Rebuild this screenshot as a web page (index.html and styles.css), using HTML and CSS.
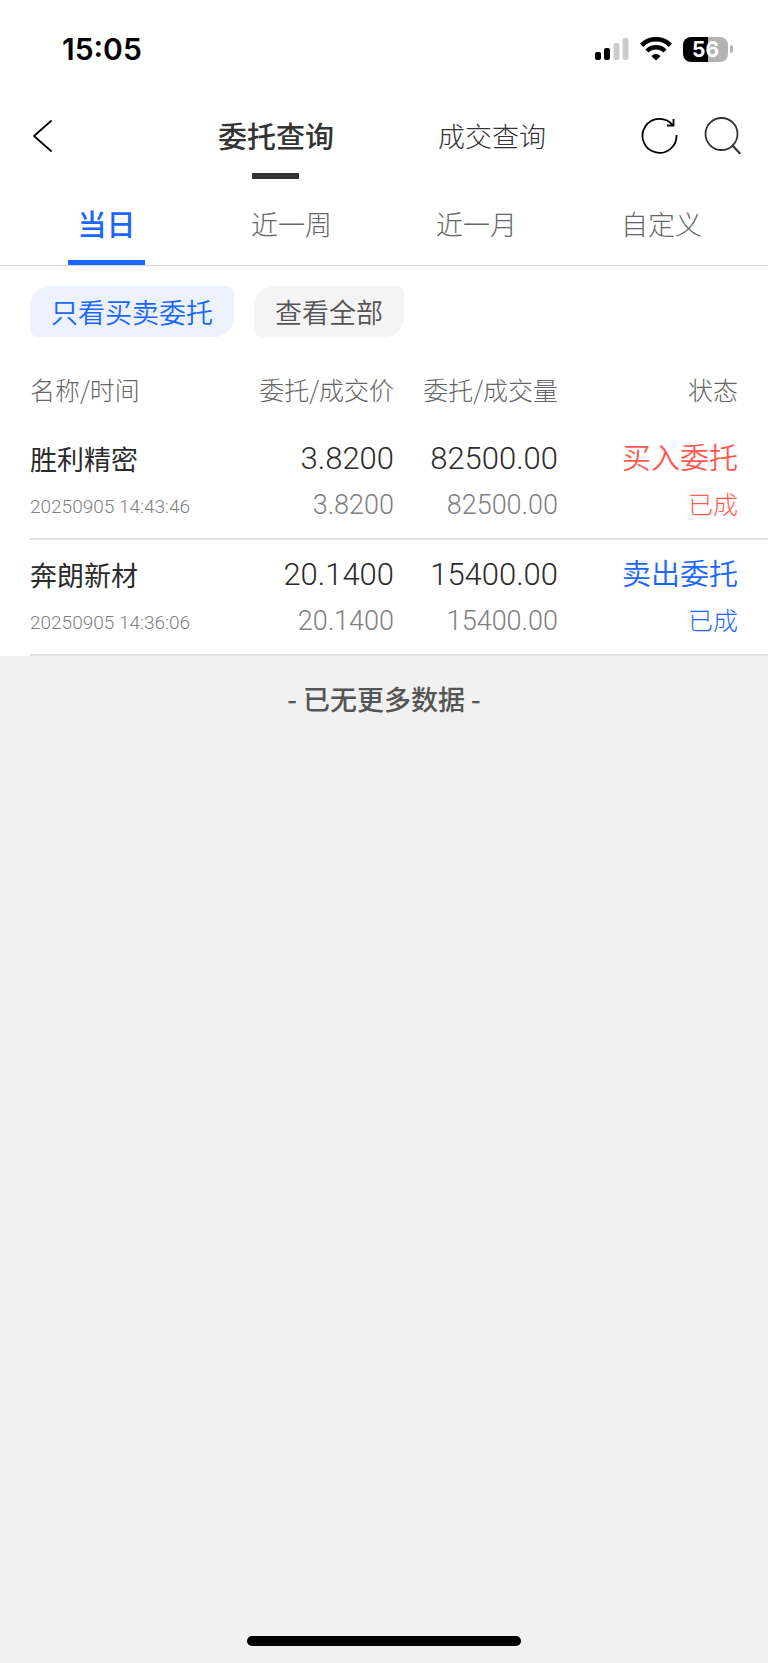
FILE: index.html
```html
<!DOCTYPE html>
<html lang="zh-CN">
<head>
    <meta charset="UTF-8">
    <meta name="viewport" content="width=device-width, initial-scale=1.0">
    <title>委托查询</title>
    <link rel="stylesheet" href="styles.css">
</head>
<body>

<div class="status-bar">
    <span class="time">15:05</span>
    <div class="status-icons">
        <svg class="signal" width="34" height="24" viewBox="0 0 34 24">
            <rect x="0" y="15" width="6" height="8" rx="2"/>
            <rect x="9" y="11" width="6" height="12" rx="2"/>
            <rect class="off" x="18.5" y="6" width="6" height="17" rx="2"/>
            <rect class="off" x="27.5" y="1" width="6" height="22" rx="2"/>
        </svg>
        <svg class="wifi" width="32" height="24" viewBox="0 0 32 24">
            <path d="M1.6 8.3 A20 20 0 0 1 30.4 8.3" fill="none" stroke="#000" stroke-width="4.6"/>
            <path d="M7 14 A12.6 12.6 0 0 1 25 14" fill="none" stroke="#000" stroke-width="4.4"/>
            <path d="M16 23.6 L11.4 19 A6.5 6.5 0 0 1 20.6 19 Z"/>
        </svg>
        <div class="battery">
            <span class="battery-level">56</span>
            <span class="battery-tip"></span>
        </div>
    </div>
</div>

<header class="nav">
    <button type="button" class="icon-btn back" aria-label="返回">
        <svg width="20" height="32" viewBox="0 0 20 32">
            <path d="M18 1 L1 16 L18 31" fill="none" stroke="#000" stroke-width="1.8" stroke-linecap="round" stroke-linejoin="round"/>
        </svg>
    </button>
    <div class="nav-tabs">
        <button type="button" class="nav-tab active">委托查询</button>
        <button type="button" class="nav-tab">成交查询</button>
    </div>
    <div class="nav-actions">
        <button type="button" class="icon-btn" aria-label="刷新">
            <svg width="37" height="38" viewBox="0 0 37 38">
                <path d="M35.5 18 A17 17 0 1 1 32 8.5" fill="none" stroke="#000" stroke-width="1.8"/>
                <path d="M32.5 2 V8.5 H26" fill="none" stroke="#000" stroke-width="1.8"/>
            </svg>
        </button>
        <button type="button" class="icon-btn" aria-label="搜索">
            <svg width="37" height="38" viewBox="0 0 37 38">
                <circle cx="17.5" cy="17" r="16" fill="none" stroke="#333" stroke-width="1.8"/>
                <path d="M28 28 L36.3 36.8" fill="none" stroke="#333" stroke-width="2.2"/>
            </svg>
        </button>
    </div>
</header>

<nav class="range-tabs">
    <button type="button" class="range-tab active">当日</button>
    <button type="button" class="range-tab">近一周</button>
    <button type="button" class="range-tab">近一月</button>
    <button type="button" class="range-tab">自定义</button>
</nav>

<main class="content">
    <div class="filters">
        <button type="button" class="chip active">只看买卖委托</button>
        <button type="button" class="chip">查看全部</button>
    </div>

    <table class="orders">
        <thead>
            <tr>
                <th class="col-name">名称/时间</th>
                <th class="col-num">委托/成交价</th>
                <th class="col-num">委托/成交量</th>
                <th class="col-status">状态</th>
            </tr>
        </thead>
        <tbody>
            <tr>
                <td>
                    <div class="name">胜利精密</div>
                    <div class="datetime">20250905 14:43:46</div>
                </td>
                <td>
                    <div class="num">3.8200</div>
                    <div class="num-sub">3.8200</div>
                </td>
                <td>
                    <div class="num">82500.00</div>
                    <div class="num-sub">82500.00</div>
                </td>
                <td class="buy">
                    <div class="side">买入委托</div>
                    <div class="state">已成</div>
                </td>
            </tr>
            <tr>
                <td>
                    <div class="name">奔朗新材</div>
                    <div class="datetime">20250905 14:36:06</div>
                </td>
                <td>
                    <div class="num">20.1400</div>
                    <div class="num-sub">20.1400</div>
                </td>
                <td>
                    <div class="num">15400.00</div>
                    <div class="num-sub">15400.00</div>
                </td>
                <td class="sell">
                    <div class="side">卖出委托</div>
                    <div class="state">已成</div>
                </td>
            </tr>
        </tbody>
    </table>
</main>

<p class="no-more">- 已无更多数据 -</p>

<div class="home-indicator"></div>

</body>
</html>
```

FILE: styles.css
```css
* {
    box-sizing: border-box;
}
body {
    display: flex;
    flex-direction: column;
    min-height: 100vh;
    margin: 0;
    background: #f1f1f1;
    color: #2b2b2b;
    font-family: "Noto Sans CJK SC", sans-serif;
    font-weight: 300;
}
button {
    padding: 0;
    border: none;
    background: none;
    color: inherit;
    font: inherit;
    cursor: pointer;
}
svg {
    display: block;
}

/* status bar */
.status-bar {
    display: flex;
    align-items: center;
    justify-content: space-between;
    height: 98px;
    padding: 0 35px 0 62px;
    background: #fff;
    color: #000;
}
.time {
    font-family: Inter, sans-serif;
    font-size: 30px;
    font-weight: 600;
}
.status-icons {
    display: flex;
    align-items: center;
    gap: 11px;
}
.signal .off {
    fill: #ccc;
}
.battery {
    display: flex;
    align-items: center;
    gap: 2px;
}
.battery-level {
    width: 45px;
    border-radius: 8px;
    background: linear-gradient(to right, #000 56%, #b3b3b3 56%);
    color: #fff;
    font-family: Inter, sans-serif;
    font-size: 21px;
    font-weight: 700;
    line-height: 25px;
    text-align: center;
}
.battery-tip {
    width: 3px;
    height: 8px;
    border-radius: 0 4px 4px 0;
    background: #b3b3b3;
}

/* header */
.nav {
    display: grid;
    grid-template-columns: 1fr auto 1fr;
    height: 81px;
    padding: 0 27px 0 23px;
    background: #fff;
}
.icon-btn {
    height: 76px;
}
.back {
    justify-self: start;
    padding-left: 10px;
}
.nav-tabs {
    display: flex;
    gap: 104px;
}
.nav-tab {
    display: flex;
    flex-direction: column;
    align-items: center;
    color: #333;
    font-size: 27px;
    line-height: 75px;
}
.nav-tab.active {
    font-size: 29px;
    font-weight: 500;
}
.nav-tab.active::after {
    content: "";
    width: 47px;
    height: 6px;
    background: #333;
}
.nav-actions {
    display: flex;
    justify-content: flex-end;
    gap: 26px;
}

/* date range */
.range-tabs {
    display: flex;
    padding: 8px 14px 0;
    border-bottom: 1px solid #d5d5d5;
    background: #fff;
}
.range-tab {
    display: flex;
    flex: 1;
    flex-direction: column;
    align-items: center;
    height: 78px;
    color: #666;
    font-size: 27px;
    line-height: 73px;
}
.range-tab.active {
    color: #1a66ff;
    font-size: 29px;
    font-weight: 500;
}
.range-tab.active::after {
    content: "";
    width: 77px;
    height: 5px;
    background: #1a66ff;
}

/* filters */
.content {
    background: #fff;
}
.filters {
    display: flex;
    gap: 20px;
    padding: 20px 30px;
}
.chip {
    padding: 0 21px;
    border-radius: 20px 8px;
    background: #f4f4f4;
    color: #555;
    font-size: 27px;
    font-weight: 350;
    line-height: 51px;
}
.chip.active {
    background: #ecf3ff;
    color: #1a66ff;
}

/* orders */
.orders {
    width: calc(100% - 30px);
    margin-left: 30px;
    border-collapse: collapse;
    table-layout: fixed;
}
.orders th {
    padding: 0 0 3px;
    color: #666;
    font-size: 25px;
    font-weight: 300;
    line-height: 64px;
    text-align: right;
    white-space: nowrap;
}
.orders .col-name {
    text-align: left;
}
.col-num {
    width: 164px;
}
.col-status {
    width: 210px;
}
.orders td {
    padding: 12px 0 6px;
    border-bottom: 2px solid #e2e2e2;
    line-height: 46px;
    text-align: right;
    vertical-align: top;
    white-space: nowrap;
}
.orders td:first-child {
    text-align: left;
}
.orders th:last-child,
.orders td:last-child {
    padding-right: 30px;
}
.name {
    font-size: 27px;
    font-weight: 400;
}
.datetime,
.num,
.num-sub {
    font-family: Roboto, sans-serif;
}
.orders .datetime {
    color: #808080;
    font-size: 19px;
    line-height: 50px;
}
.num {
    font-size: 31px;
}
.num-sub {
    color: #808080;
    font-size: 27px;
}
.side {
    font-size: 29px;
    font-weight: 350;
    line-height: 40px;
}
.state {
    font-size: 25px;
    line-height: 54px;
}
.buy {
    color: #ff5a52;
}
.sell {
    color: #1a66ff;
}

/* footer */
.no-more {
    margin: 19px 0;
    color: #555;
    font-size: 27px;
    font-weight: 500;
    line-height: 48px;
    text-align: center;
}
.home-indicator {
    width: 274px;
    height: 10px;
    margin: auto auto 17px;
    border-radius: 5px;
    background: #000;
}
```
